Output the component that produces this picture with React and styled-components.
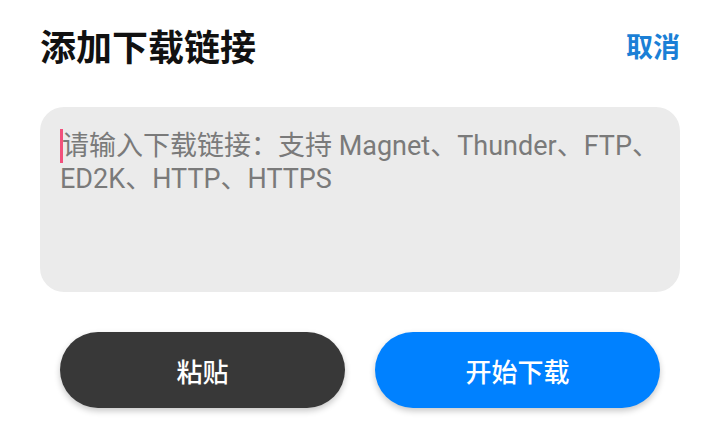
import React from "react";
import styled, { createGlobalStyle } from "styled-components";

const GlobalStyle = createGlobalStyle`
  html, body {
    margin: 0;
    padding: 0;
    background: #ffffff;
  }
  body {
    font-family: Roboto, "Noto Sans CJK SC", "Noto Sans", sans-serif;
  }
`;

const Sheet = styled.div`
  width: 720px;
  height: 448px;
  box-sizing: border-box;
  padding: 19px 40px 0;
  display: flex;
  flex-direction: column;
  background: #fff;
`;

const Header = styled.div`
  display: flex;
  align-items: center;
  justify-content: space-between;
  height: 52px;
`;

const Title = styled.h1`
  margin: 0;
  font-size: 36px;
  font-weight: 700;
  color: #111;
`;

const Cancel = styled.button`
  border: none;
  background: none;
  padding: 0;
  font-family: inherit;
  font-size: 27px;
  font-weight: 700;
  color: #1a7fd6;
  cursor: pointer;
`;

const InputBox = styled.div`
  margin-top: 36px;
  height: 185px;
  box-sizing: border-box;
  padding: 22px 20px;
  border-radius: 24px;
  background: #ebebeb;
  font-size: 27px;
  line-height: 33px;
  color: #7a7a7a;
`;

const Caret = styled.span`
  display: inline-block;
  width: 3px;
  height: 34px;
  margin-right: -1px;
  vertical-align: -8px;
  background: #f2507c;
`;

const Actions = styled.div`
  display: flex;
  gap: 30px;
  padding: 0 20px;
  margin-top: 40px;
`;

const ActionButton = styled.button`
  flex: 1;
  height: 76px;
  border: none;
  border-radius: 38px;
  background: ${(p) => (p.$primary ? "#0081ff" : "#383838")};
  color: #fff;
  font-family: inherit;
  font-size: 26px;
  font-weight: 500;
  box-shadow: 0 3px 6px rgba(0, 0, 0, 0.22);
  cursor: pointer;
`;

export default function App() {
  return (
    <>
      <GlobalStyle />
      <Sheet>
        <Header>
          <Title>添加下载链接</Title>
          <Cancel>取消</Cancel>
        </Header>
        <InputBox>
          <Caret />
          请输入下载链接：支持 Magnet、Thunder、FTP、ED2K、HTTP、HTTPS
        </InputBox>
        <Actions>
          <ActionButton>粘贴</ActionButton>
          <ActionButton $primary>开始下载</ActionButton>
        </Actions>
      </Sheet>
    </>
  );
}
